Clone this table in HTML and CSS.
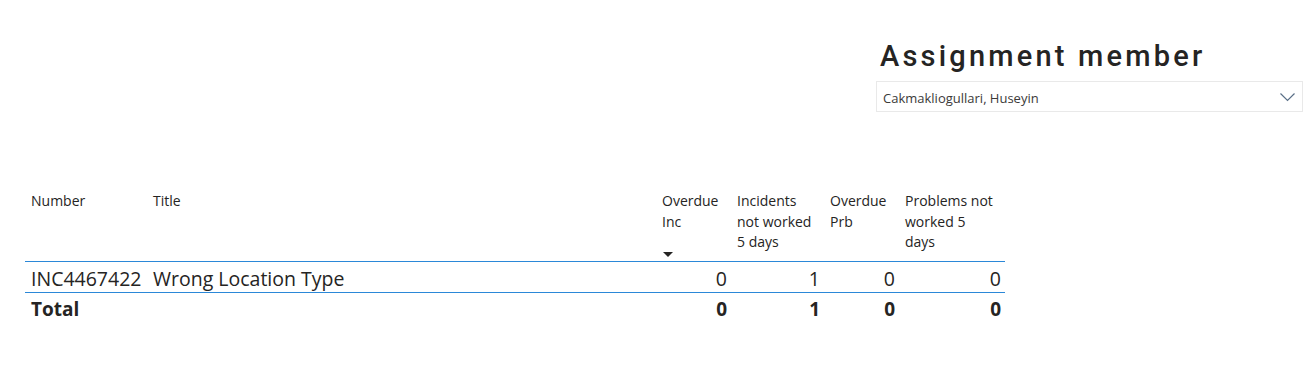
FILE: index.html
```html
<!DOCTYPE html>
<html>
<head>
<meta charset="utf-8">
<link rel="stylesheet" href="styles.css">
</head>
<body>
<div class="page">
  <div class="top">
    <div class="slicer">
      <div class="slicer-title">Assignment member</div>
      <div class="dropdown">
        <span class="dropdown-value">Cakmakliogullari, Huseyin</span>
        <svg class="chev" width="15" height="9" viewBox="0 0 15 9"><path d="M0.5 0.5 L7.5 7.5 L14.5 0.5" fill="none" stroke="#5a6f87" stroke-width="1.2"/></svg>
      </div>
    </div>
  </div>
  <div class="table">
    <div class="row head">
      <div class="cell">Number</div>
      <div class="cell">Title</div>
      <div class="cell">Overdue<br>Inc<span class="sort"></span></div>
      <div class="cell">Incidents<br>not worked<br>5 days</div>
      <div class="cell">Overdue<br>Prb</div>
      <div class="cell">Problems not<br>worked 5<br>days</div>
    </div>
    <div class="row body">
      <div class="cell">INC4467422</div>
      <div class="cell">Wrong Location Type</div>
      <div class="cell num">0</div>
      <div class="cell num">1</div>
      <div class="cell num">0</div>
      <div class="cell num">0</div>
    </div>
    <div class="row total">
      <div class="cell">Total</div>
      <div class="cell"></div>
      <div class="cell num">0</div>
      <div class="cell num">1</div>
      <div class="cell num">0</div>
      <div class="cell num">0</div>
    </div>
  </div>
</div>
</body>
</html>
```
FILE: styles.css
```css
html, body {
  margin: 0;
  padding: 0;
  background: #ffffff;
}
.page {
  width: 1310px;
  height: 377px;
  font-family: "Open Sans", "Noto Sans", sans-serif;
  color: #252423;
}
.top {
  display: flex;
  justify-content: flex-end;
  padding: 36px 7px 0 0;
}
.slicer {
  width: 427px;
}
.slicer-title {
  font-family: "Roboto", "Liberation Sans", sans-serif;
  font-size: 29px;
  font-weight: 500;
  line-height: 40px;
  padding-left: 4px;
  color: #252423;
  letter-spacing: 3.2px;
}
.dropdown {
  margin-top: 5px;
  border: 1px solid #e9e9e9;
  display: flex;
  align-items: center;
  justify-content: space-between;
  padding: 2px 6px 0 6px;
  box-sizing: border-box;
  height: 31px;
}
.dropdown-value {
  font-size: 13px;
  color: #3b3a39;
}
.chev {
  margin-right: 1px;
  margin-bottom: 1px;
}
.table {
  margin: 79px 0 0 25px;
  width: 980px;
}
.row {
  display: grid;
  grid-template-columns: 122px 509px 75px 93px 75px 106px;
}
.head {
  font-size: 14px;
  line-height: 20.5px;
  height: 70px;
  border-bottom: 1px solid #2b88d8;
  color: #252423;
}
.head .cell {
  padding: 0 6px;
  position: relative;
}
.sort {
  position: absolute;
  left: 7px;
  top: 61px;
  width: 0;
  height: 0;
  border-left: 5px solid transparent;
  border-right: 5px solid transparent;
  border-top: 5px solid #252423;
}
.body {
  align-items: center;
  font-size: 19.5px;
  padding-top: 2px;
  box-sizing: border-box;
  height: 31px;
  border-bottom: 1px solid #2b88d8;
}
.body .cell, .total .cell {
  padding: 0 6px;
}
.num {
  text-align: right;
  padding-right: 4px !important;
}
.total {
  height: 32px;
  align-items: center;
  font-size: 19px;
  font-weight: 700;
}
```
